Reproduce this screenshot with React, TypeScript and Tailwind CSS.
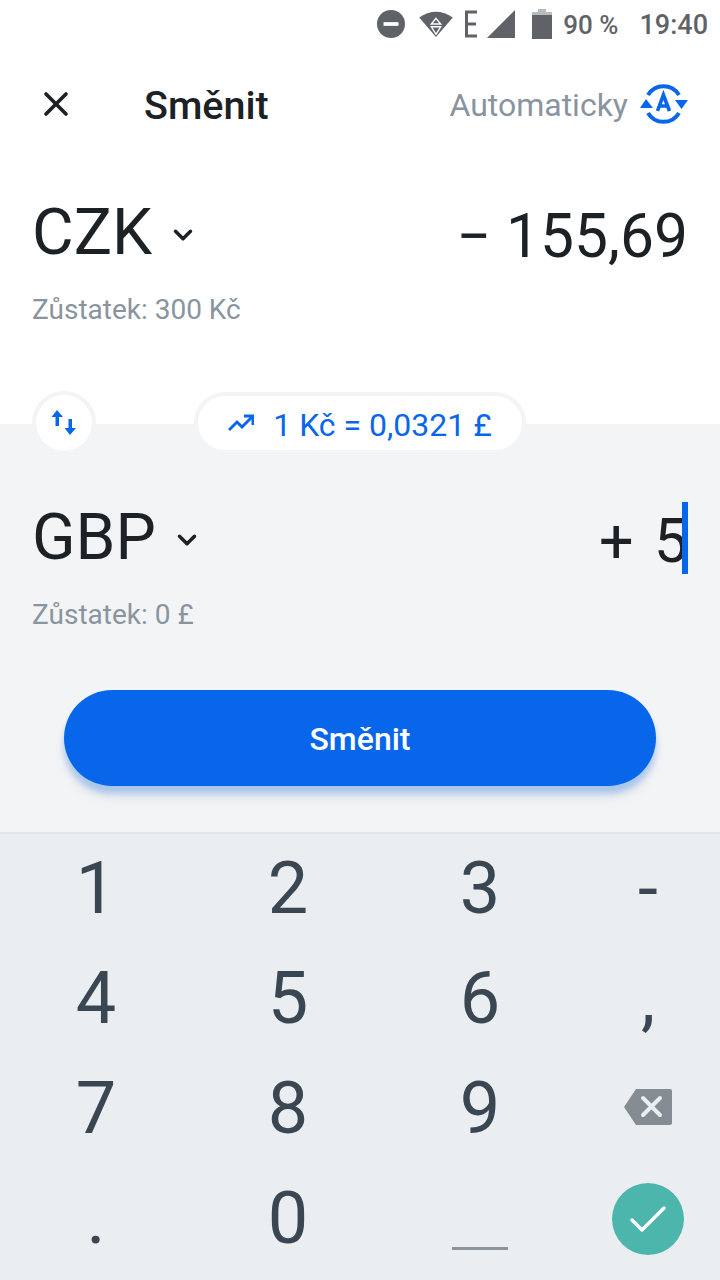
import { X, ChevronDown } from "lucide-react";

const keys = ["1", "2", "3", "-", "4", "5", "6", ",", "7", "8", "9"];

function StatusBar() {
  return (
    <div className="flex h-[48px] items-center justify-end pr-[12px] text-[#5f6368]">
      <svg width="28" height="28" viewBox="0 0 30 30" className="mr-[14px]">
        <circle cx="15" cy="15" r="15" fill="#5f6368" />
        <rect x="7" y="13" width="16" height="4" fill="#fff" />
      </svg>
      <svg width="34" height="28" viewBox="0 0 36 30" className="mr-[12px]">
        <path d="M0 8 Q18 -4 36 8 L18 29 Z" fill="#5f6368" />
        <path d="M18 9 L23 15 H13 Z M18 26 L23 18 H13 Z" fill="none" stroke="#fff" strokeWidth="1.5" />
      </svg>
      <svg width="12" height="28" viewBox="0 0 12 28" className="mr-[10px]">
        <path d="M12 2 H1.5 V26 H12 M1.5 14 H11" fill="none" stroke="#5f6368" strokeWidth="3" />
      </svg>
      <svg width="28" height="28" viewBox="0 0 29 29" className="mr-[17px]">
        <path d="M29 0 V29 H0 Z" fill="#5f6368" />
      </svg>
      <svg width="20" height="30" viewBox="0 0 20 30" className="mr-[11px]">
        <path d="M6 0 H14 V3 H20 V7 H0 V3 H6 Z" fill="#b9bcbf" />
        <rect x="0" y="6" width="20" height="24" fill="#5f6368" />
      </svg>
      <span className="mr-[21px] mt-[2px] text-[26px] font-medium leading-none">90 %</span>
      <span className="mt-[2px] text-[27px] font-medium leading-none">19:40</span>
    </div>
  );
}

function AutoIcon() {
  return (
    <svg width="48" height="40" viewBox="0 0 48 40" fill="none" stroke="#0866eb">
      <path d="M8 11 A18 18 0 0 1 39 11" strokeWidth="4" />
      <path d="M39 29 A18 18 0 0 1 8 29" strokeWidth="4" />
      <path d="M6 15 L13 24 H0 Z" fill="#0866eb" stroke="none" />
      <path d="M35 16 H48 L41.5 25 Z" fill="#0866eb" stroke="none" />
      <path d="M17.5 27 L23.4 11 L29.5 27 M19.5 22 H27.5" strokeWidth="3.6" />
    </svg>
  );
}

function SwapIcon() {
  return (
    <svg width="26" height="26" viewBox="0 0 26 26" fill="#0866eb">
      <path d="M6 0 L12 7 H8 V16 H4.5 V7 H0.5 Z" />
      <path d="M19 25 L25 18 H21 V9 H17.5 V18 H13.5 Z" />
    </svg>
  );
}

function TrendIcon() {
  return (
    <svg width="26" height="18" viewBox="0 0 26 18" fill="none" stroke="#0866eb" strokeWidth="3">
      <path d="M1 16 L9 8 L14 13 L24 3" />
      <path d="M16 2 H25 V11" />
    </svg>
  );
}

function BackspaceIcon() {
  return (
    <svg width="48" height="36" viewBox="0 0 48 36" className="mb-[4px]">
      <path d="M12 0 H46 Q48 0 48 2 V34 Q48 36 46 36 H12 L0 18 Z" fill="#858c93" />
      <path d="M19 9 L36 26 M36 9 L19 26" stroke="#ebeef1" strokeWidth="4" strokeLinecap="round" />
    </svg>
  );
}

function CheckIcon() {
  return (
    <svg width="36" height="28" viewBox="0 0 36 28" fill="none" stroke="#fff" strokeWidth="3.4" strokeLinecap="round" strokeLinejoin="round">
      <path d="M2 15 L12 25 L34 3" />
    </svg>
  );
}

export default function App() {
  return (
    <div className="flex h-[1280px] w-[720px] flex-col overflow-hidden bg-white font-['Roboto',sans-serif] text-[#1c2126]">
      <StatusBar />

      {/* Header */}
      <div className="flex h-[112px] items-center pl-[36px] pr-[32px]">
        <X size={40} strokeWidth={2.2} />
        <span className="ml-[68px] mt-[3px] text-[39.5px] font-medium">Směnit</span>
        <span className="ml-auto mr-[12px] mt-[2px] text-[32px] text-[#8a949e]">Automaticky</span>
        <AutoIcon />
      </div>

      {/* From */}
      <div className="h-[264px] px-[32px] pt-[37px]">
        <div className="flex h-[72px] items-center">
          <span className="text-[64px] leading-none">CZK</span>
          <ChevronDown size={30} strokeWidth={2.8} className="ml-[16px] mt-[4px]" />
          <span className="ml-auto mt-[8px] text-[60.5px] leading-none">− 155,69</span>
        </div>
        <div className="mt-[20px] text-[28px] text-[#8a949e]">Zůstatek: 300 Kč</div>
      </div>

      {/* To */}
      <div className="relative h-[408px] bg-[#f2f4f6] px-[32px] pt-[78px]">
        <div className="absolute left-[32px] top-[-33px] flex h-[64px] w-[64px] items-center justify-center rounded-full border-[4px] border-[#f2f4f6] bg-white">
          <SwapIcon />
        </div>
        <div className="absolute left-[194px] top-[-32px] flex h-[62px] w-[332px] items-center justify-center gap-[19px] rounded-full border-[4px] border-[#f2f4f6] bg-white text-[32px] text-[#0866eb]">
          <TrendIcon />
          <span className="mt-[3px]">1 Kč = 0,0321 £</span>
        </div>
        <div className="flex h-[72px] items-center">
          <span className="text-[64px] leading-none">GBP</span>
          <ChevronDown size={30} strokeWidth={2.8} className="ml-[16px] mt-[4px]" />
          <span className="ml-auto flex items-center text-[61px] leading-none">
            <span className="mt-[6px]">+</span>
            <span className="ml-[20px] mt-[6px]">5</span>
            <span className="ml-[-6px] h-[72px] w-[6px] bg-[#0866eb]" />
          </span>
        </div>
        <div className="mt-[20px] text-[28px] text-[#8a949e]">Zůstatek: 0 £</div>
        <button className="mx-auto mt-[54px] flex h-[96px] w-[592px] items-center justify-center rounded-full bg-[#0866eb] pt-[2px] text-[32px] font-medium text-white shadow-[0_8px_6px_rgba(8,102,235,0.28),0_14px_14px_rgba(0,0,0,0.04)]">
          Směnit
        </button>
      </div>

      {/* Keypad */}
      <div className="grid flex-1 grid-cols-[192px_192px_192px_144px] grid-rows-[repeat(4,110px)] border-t-[2px] border-[#e3e6e9] bg-[#ebeef1] text-[#3a4752]">
        {keys.map((k) => (
          <div key={k} className="flex items-center justify-center text-[72px] leading-none">
            {k}
          </div>
        ))}
        <div className="flex items-center justify-center">
          <BackspaceIcon />
        </div>
        <div className="flex items-center justify-center text-[72px] leading-none">.</div>
        <div className="flex items-center justify-center text-[72px] leading-none">0</div>
        <div className="flex items-center justify-center pt-[58px]">
          <div className="h-[3px] w-[56px] bg-[#8a949e]" />
        </div>
        <div className="flex items-center justify-center">
          <div className="flex h-[72px] w-[72px] items-center justify-center rounded-full bg-[#4db6ac]">
            <CheckIcon />
          </div>
        </div>
      </div>
    </div>
  );
}
